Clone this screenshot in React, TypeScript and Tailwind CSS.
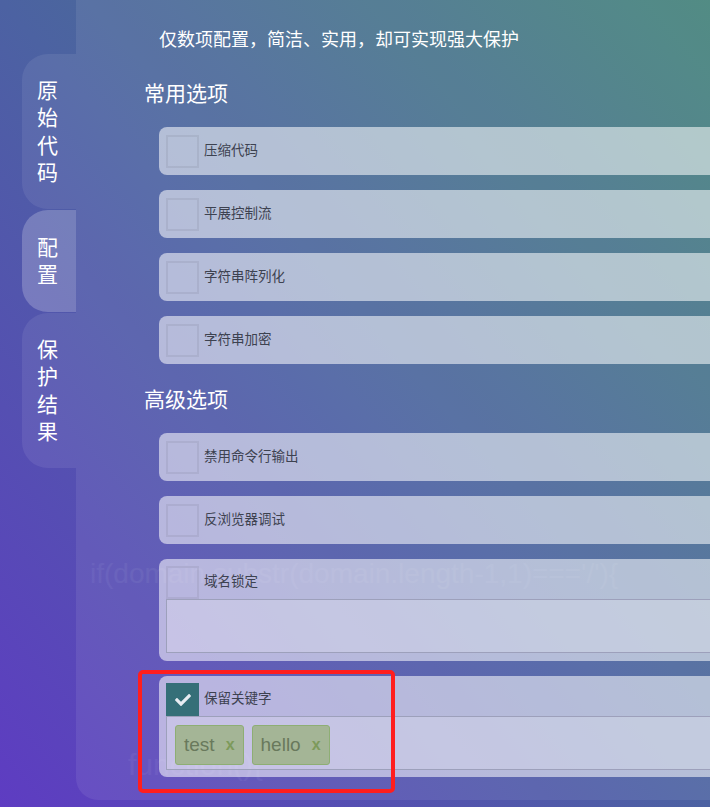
import { FaCheck } from 'react-icons/fa';

const tabs = [
  { label: '原始代码', h: 'h-[155px]', active: false },
  { label: '配置', h: 'h-[102px]', active: true },
  { label: '保护结果', h: 'h-[155px]', active: false },
];

const common = ['压缩代码', '平展控制流', '字符串阵列化', '字符串加密'];
const advanced = ['禁用命令行输出', '反浏览器调试'];
const keywords = ['test', 'hello'];

function Box({ checked = false }: { checked?: boolean }) {
  if (checked) {
    return (
      <div className="w-[33px] h-[33px] shrink-0 bg-[#356f78] flex items-center justify-center">
        <FaCheck className="text-[#e8ecf2]" size={16} />
      </div>
    );
  }
  return <div className="w-[33px] h-[33px] shrink-0 border-2 border-black/[0.06]" />;
}

function Option({ label }: { label: string }) {
  return (
    <div className="h-[48px] rounded-[8px] bg-white/55 px-[7px] flex items-center">
      <Box />
      <span className="ml-[5px] text-[13.5px] text-[#3d4250]">{label}</span>
    </div>
  );
}

export default function App() {
  return (
    <div
      className="relative w-[710px] h-[807px] overflow-hidden flex bg-[linear-gradient(to_top_right,#5e3cc2_0%,#4c62a2_50%,#44837a_100%)]"
      style={{ fontFamily: '"Liberation Sans", "Noto Sans CJK SC", sans-serif' }}
    >
      {/* faint code watermark, behind the cards */}
      <div className="pointer-events-none absolute z-0 left-[90px] top-[553px] text-[28px] text-white/[0.05] whitespace-nowrap">
        {"if(domain.substr(domain.length-1,1)==='/'){"}
      </div>
      <div className="pointer-events-none absolute z-0 left-[128px] top-[742px] text-[30px] text-white/[0.05] whitespace-nowrap">
        {'function(){'}
      </div>

      {/* side tabs */}
      <div className="relative z-[1] w-[76px] shrink-0 pt-[54px] pl-[22px] flex flex-col gap-[1px]">
        {tabs.map((t) => (
          <div
            key={t.label}
            className={`${t.h} rounded-l-[26px] flex flex-col items-center justify-center pr-[3px] text-white text-[21px] leading-[27.5px] ${
              t.active ? 'bg-white/[0.22]' : 'bg-white/[0.08]'
            }`}
          >
            {t.label.split('').map((c, i) => (
              <span key={i}>{c}</span>
            ))}
          </div>
        ))}
      </div>

      {/* main panel */}
      <div className="relative z-[1] flex-1 h-[800px] rounded-bl-[22px] bg-white/[0.08] pl-[68px] pt-[28px]">
        <p className="ml-[15px] text-[18px] leading-[24px] text-white whitespace-nowrap">
          仅数项配置，简洁、实用，却可实现强大保护
        </p>

        <h2 className="mt-[28px] text-[21px] leading-[28px] text-white">常用选项</h2>
        <div className="mt-[19px] ml-[15px] w-[620px] flex flex-col gap-[15px]">
          {common.map((l) => (
            <Option key={l} label={l} />
          ))}
        </div>

        <h2 className="mt-[22px] text-[21px] leading-[28px] text-white">高级选项</h2>
        <div className="mt-[19px] ml-[15px] w-[620px] flex flex-col gap-[15px]">
          {advanced.map((l) => (
            <Option key={l} label={l} />
          ))}

          <div className="rounded-[8px] bg-white/55 px-[7px] pt-[7px] pb-[8px]">
            <div className="flex items-center">
              <Box />
              <span className="ml-[5px] text-[13.5px] text-[#3d4250]">域名锁定</span>
            </div>
            <div className="h-[54px] border border-[#9da0bb] bg-white/20" />
          </div>

          <div className="rounded-[8px] bg-white/55 px-[7px] pt-[7px] pb-[7px]">
            <div className="flex items-center">
              <Box checked />
              <span className="ml-[5px] text-[13.5px] text-[#3d4250]">保留关键字</span>
            </div>
            <div className="h-[54px] border border-[#9da0bb] bg-white/20 pl-[8px] pt-[8px] flex gap-[8px] items-start">
              {keywords.map((k) => (
                <div
                  key={k}
                  className="h-[40px] pl-[8px] pr-[8px] flex items-center rounded-[3px] border border-[#8eae74] bg-[#a4b596]"
                >
                  <span className="text-[19px] text-[#69795c]">{k}</span>
                  <span className="ml-[11px] text-[16px] font-bold text-[#7d9a5b]">x</span>
                </div>
              ))}
            </div>
          </div>
        </div>
      </div>

      {/* highlight annotation */}
      <div className="pointer-events-none absolute z-[2] left-[138px] top-[670px] w-[257px] h-[123px] border-[4px] border-[#ff1e1e] rounded-[5px]" />
    </div>
  );
}
